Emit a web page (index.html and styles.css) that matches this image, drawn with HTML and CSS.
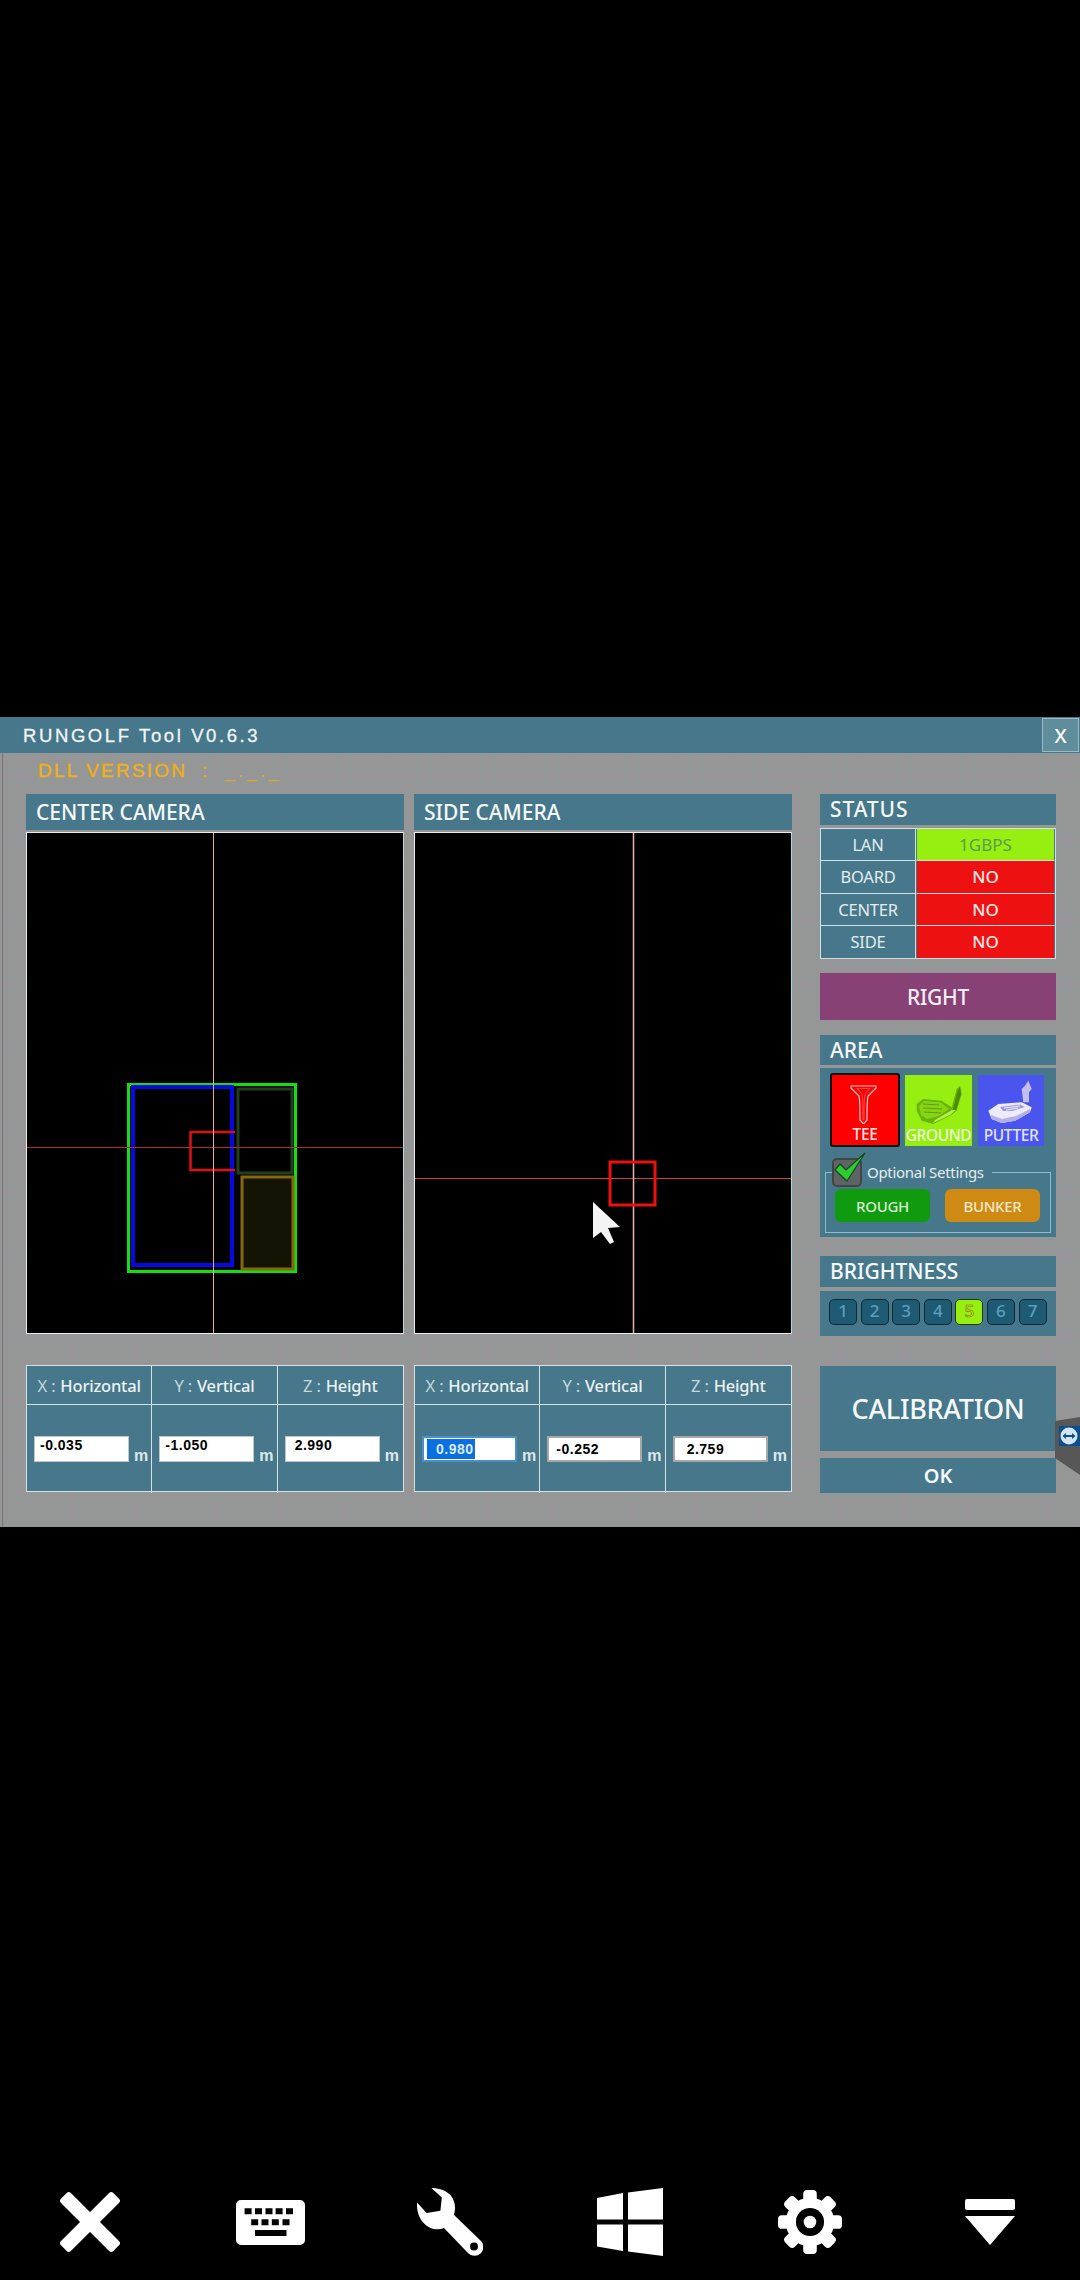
FILE: index.html
```html
<!DOCTYPE html>
<html lang="en">
<head>
<meta charset="utf-8">
<title>RUNGOLF Tool</title>
<link rel="stylesheet" href="styles.css">
</head>
<body>
<div class="screen">
  <main class="window">
    <header class="titlebar">
      <span class="title">RUNGOLF Tool V0.6.3</span>
      <button class="close">X</button>
    </header>
    <div class="dll">DLL VERSION&nbsp; :&nbsp; <span class="dll-v">_._._</span></div>
    <div class="content">
      <section class="cam-col">
        <h2 class="head cam-head">CENTER CAMERA</h2>
        <svg class="camera" viewBox="0 0 376 500" width="378" height="502">
          <rect x="101.500" y="251.500" width="167" height="187" fill="none" stroke="#10e010" stroke-width="3"/>
          <rect x="106" y="254" width="99" height="178" fill="none" stroke="#0808e0" stroke-width="4"/>
          <rect x="211" y="256" width="54" height="84" fill="none" stroke="#1e401e" stroke-width="3"/>
          <rect x="215" y="344" width="51" height="92" fill="#141405" stroke="#8a6510" stroke-width="3"/>
          <path d="M208 299H163.500V337H208" fill="none" stroke="#e01010" stroke-width="2.500"/>
          <path d="M0 314.500H376" stroke="#b52a2a" stroke-width="1"/>
          <path d="M186.500 0V500" stroke="#e8a8a0" stroke-width="1"/>
        </svg>
        <div class="coords">
          <div class="c-head"><span class="dim">X :</span> Horizontal</div>
          <div class="c-head"><span class="dim">Y :</span> Vertical</div>
          <div class="c-head"><span class="dim">Z :</span> Height</div>
          <div class="c-cell"><div class="field hi"><span>-0.035</span></div><span class="unit">m</span></div>
          <div class="c-cell"><div class="field hi"><span>-1.050</span></div><span class="unit">m</span></div>
          <div class="c-cell"><div class="field hi ind"><span>2.990</span></div><span class="unit">m</span></div>
        </div>
      </section>
      <section class="cam-col">
        <h2 class="head cam-head">SIDE CAMERA</h2>
        <svg class="camera" viewBox="0 0 376 500" width="378" height="502">
          <path d="M0 345.500H376" stroke="#d04040" stroke-width="1"/>
          <path d="M218.500 0V500" stroke="#eeb0a8" stroke-width="1.500"/>
          <rect x="195" y="329" width="45" height="43" fill="none" stroke="#ee1010" stroke-width="3"/>
          <polygon points="178,369 178,405 186,399 195,411 199,409 193,395 205,394" fill="#f4f4f4"/>
        </svg>
        <div class="coords">
          <div class="c-head"><span class="dim">X :</span> Horizontal</div>
          <div class="c-head"><span class="dim">Y :</span> Vertical</div>
          <div class="c-head"><span class="dim">Z :</span> Height</div>
          <div class="c-cell"><div class="field focus"><span class="sel">0.980</span></div><span class="unit">m</span></div>
          <div class="c-cell"><div class="field"><span>-0.252</span></div><span class="unit">m</span></div>
          <div class="c-cell"><div class="field ind"><span>2.759</span></div><span class="unit">m</span></div>
        </div>
      </section>
      <aside class="side">
        <h2 class="head side-head status-head">STATUS</h2>
        <div class="status">
          <div class="s-name">LAN</div><div class="s-val ok">1GBPS</div>
          <div class="s-name">BOARD</div><div class="s-val no">NO</div>
          <div class="s-name">CENTER</div><div class="s-val no">NO</div>
          <div class="s-name">SIDE</div><div class="s-val no">NO</div>
        </div>
        <button class="right-btn">RIGHT</button>
        <h2 class="head side-head area-head">AREA</h2>
        <div class="area">
          <div class="clubs">
            <div class="club tee">
              <svg class="club-art" viewBox="0 0 66 48" width="66" height="48">
                <path d="M19 10H44V12L36 20C35 24 35 30 35 44L31.500 48L28 44C28 30 28 24 27 20L19 12Z" fill="none" stroke="#ffc8c8" stroke-width="1.200"/>
                <path d="M25 12.500H38L33 18C32 24 32 32 32 44H31C31 32 31 24 30 18Z" fill="none" stroke="#ff5a5a" stroke-width=".8"/>
              </svg>
              <span>TEE</span>
            </div>
            <div class="club ground">
              <svg class="club-art" viewBox="0 0 67 50" width="67" height="50">
                <path d="M11.700 29L18.300 24L36.700 25.700L46.700 32.300L51.700 14L55 10.700L56.700 19L51.700 35.700L45 40.700L28.300 49L16.700 45.700L11.700 35.700Z" fill="#69b408"/>
                <path d="M14 31L19 26L36 27.500L44 34L34 41L22 44L16 40Z" fill="#86d414"/>
                <path d="M18 29L34 30M18 33L37 34M19 37L36 38" stroke="#5da106" stroke-width="1"/>
                <path d="M52 18L55 11.500L56 19L51 35L47 39Z" fill="#4d8a06"/>
                <path d="M28 48L45 40L51 35L47 35L30 45Z" fill="#b4ee4a"/>
              </svg>
              <span>GROUND</span>
            </div>
            <div class="club putter">
              <svg class="club-art" viewBox="0 0 66 50" width="66" height="50">
                <path d="M45.300 27.300L43.700 14L47 10.700L50.300 5.700L53.700 14L51 17.300V27.300Z" fill="#c4bef0"/>
                <path d="M10.300 35.700L20.300 29L43.700 27.300L53.700 32.300L52 37.300L37 45.700L23.700 48L13.700 44Z" fill="#ecebfc"/>
                <path d="M13 40L24 44L38 41L52 34L52 37.300L37 45.700L23.700 48L13.700 44Z" fill="#b5aeea"/>
                <path d="M22 32L42 29.500L47 32L34 36L25 36Z" fill="#9d96e6"/>
                <path d="M26 33L42 31M28 35L40 33" stroke="#f2f0ff" stroke-width="1"/>
              </svg>
              <span>PUTTER</span>
            </div>
          </div>
          <fieldset class="optional">
            <legend class="opt-legend">
              <span class="checkbox">
                <svg viewBox="0 0 34 34" width="34" height="34"><path d="M2 21L7 15L13 21L32 4L14 32Z" fill="#2fcb35" stroke="#134a18" stroke-width="1.200"/></svg>
              </span>
              <span class="opt-label">Optional Settings</span>
            </legend>
            <div class="opt-btns">
              <button class="opt rough">ROUGH</button>
              <button class="opt bunker">BUNKER</button>
            </div>
          </fieldset>
        </div>
        <h2 class="head side-head bright-head">BRIGHTNESS</h2>
        <div class="bright">
          <span class="lvl">1</span><span class="lvl">2</span><span class="lvl">3</span><span class="lvl">4</span><span class="lvl on">5</span><span class="lvl">6</span><span class="lvl">7</span>
        </div>
        <button class="calib">CALIBRATION</button>
        <button class="ok">OK</button>
      </aside>
    </div>
    <div class="tv-tab">
      <svg viewBox="0 0 26 58" width="26" height="58">
        <path d="M1 4L26 0V58L1 41Z" fill="#575757"/>
        <rect x="5" y="9" width="21" height="20" fill="#0a4f8f"/>
        <circle cx="15" cy="19" r="8.500" fill="#d6e4ef"/>
        <path d="M8.500 19L12 16V18H18V16L21.500 19L18 22V20H12V22Z" fill="#0a4f8f"/>
      </svg>
    </div>
  </main>
  <nav class="dock">
    <svg class="ico" viewBox="0 0 70 70" width="70" height="70"><g fill="#fff" transform="rotate(45 35 35)"><rect x="-2" y="28" width="74" height="14" rx="3"/><rect x="28" y="-2" width="14" height="74" rx="3"/></g></svg>
    <svg class="ico" viewBox="0 0 69 45" width="69" height="45"><path fill="#fff" fill-rule="evenodd" d="M5 0H64A5 5 0 0 1 69 5V40A5 5 0 0 1 64 45H5A5 5 0 0 1 0 40V5A5 5 0 0 1 5 0ZM8.600 8.300V14.300H15.600V8.300ZM19 8.300V14.300H26V8.300ZM29.500 8.300V14.300H36.500V8.300ZM39.600 8.300V14.300H46.600V8.300ZM50 8.300V14.300H57V8.300ZM15.200 19.300V25.300H22.200V19.300ZM25.500 19.300V25.300H32.500V19.300ZM35.800 19.300V25.300H42.800V19.300ZM46.500 19.300V25.300H53.500V19.300ZM19 30V36H50.500V30Z"/></svg>
    <svg class="ico" viewBox="0 0 66 68" width="66" height="68"><path fill="#fff" fill-rule="evenodd" d="M14.500 0C28 0 42 8 37 27L64 53A8.700 8.700 0 0 1 51 65L27 40C14 45 -1 34 0 14.500L9.600 25L23.400 22.700L24.800 9.600ZM57 54.500A4 4 0 1 0 57 62.500A4 4 0 1 0 57 54.500Z"/></svg>
    <svg class="ico" viewBox="0 0 66.500 68" width="66.500" height="68"><path fill="#fff" d="M0 10L26 5V31.500H0ZM31 4.500L66.500 0V31.500H31ZM0 36.500H26V63L0 58.500ZM31 36.500H66.500V68L31 63.500Z"/></svg>
    <svg class="ico" viewBox="0 0 66 66" width="64" height="64"><g fill="#fff"><rect x="26" y="0" width="14" height="66" rx="4"/><rect x="26" y="0" width="14" height="66" rx="4" transform="rotate(45 33 33)"/><rect x="26" y="0" width="14" height="66" rx="4" transform="rotate(90 33 33)"/><rect x="26" y="0" width="14" height="66" rx="4" transform="rotate(135 33 33)"/><circle cx="33" cy="33" r="25"/></g><circle cx="33" cy="33" r="14.500" fill="#000"/><circle cx="33" cy="33" r="6.500" fill="#fff"/></svg>
    <svg class="ico" viewBox="0 0 50 46" width="50" height="46"><path fill="#fff" d="M2 0H48A2 2 0 0 1 50 2V9A2 2 0 0 1 48 11H2A2 2 0 0 1 0 9V2A2 2 0 0 1 2 0ZM0 17H50L25 46Z"/></svg>
  </nav>
</div>
</body>
</html>
```
FILE: styles.css
```css
* { box-sizing: border-box; }
html, body { margin: 0; padding: 0; background: #000; }
body { width: 1080px; height: 2280px; overflow: hidden; font-family: "Noto Sans", "Open Sans", sans-serif; color: #fff; }
button { font-family: inherit; border: 0; padding: 0; margin: 0; display: block; color: #fff; }
h2 { margin: 0; font-weight: 500; }

.screen { display: flex; flex-direction: column; height: 2280px; padding-top: 717px; }

.window {
  position: relative;
  height: 810px;
  background-color: #969696;
  background-image:
    linear-gradient(to right, #969696 2px, #777 2px, #777 3px, transparent 3px),
    repeating-linear-gradient(to right, rgba(120,165,170,.16) 0 1px, transparent 1px 13px),
    repeating-linear-gradient(to bottom, rgba(120,165,170,.16) 0 1px, transparent 1px 13px);
}

.titlebar { height: 36px; background: #46778a; display: flex; align-items: center; justify-content: space-between; }
.title { font: 18.500px "Liberation Sans", Arial, sans-serif; letter-spacing: 2.6px; -webkit-text-stroke: .3px #f0f5f6; margin: 2px 0 0 23px; color: #f0f5f6; }
.close { width: 37px; height: 34px; background: #5f8d9b; border: 1px solid #9bbcc4; font: 500 20px "Noto Sans", sans-serif; margin-right: 1px; }

.dll { height: 41px; padding: 4px 0 0 38px; font: 19px/27px "Liberation Sans", Arial, sans-serif; letter-spacing: 2.2px; -webkit-text-stroke: .35px #efb116; color: #efb116; white-space: pre; }
.dll-v { color: #d6a73a; -webkit-text-stroke: 0; letter-spacing: 3px; }

.content { display: flex; padding-left: 26px; }
.cam-col { width: 378px; margin-right: 10px; }
.head { background: #46778a; color: #f4f8f9; font-size: 21px; letter-spacing: 0; line-height: 36px; }
.cam-head { height: 36px; padding-left: 10px; }
.camera { display: block; margin-top: 2px; background: #000; border: 1px solid #e8eef0; border-right-color: #a8dde0; }

.coords {
  margin-top: 31px;
  display: grid;
  grid-template-columns: repeat(3, 1fr);
  grid-template-rows: 39px 88px;
  background: #46778a;
  border: 1px solid #d5e3e6;
  height: 127px;
}
.c-head { display: flex; align-items: center; justify-content: center; gap: 5px; font-size: 16.500px; letter-spacing: -.2px; color: #eaf2f3; border-bottom: 1px solid #d5e3e6; border-right: 1px solid #d5e3e6; white-space: nowrap; font-weight: 500; }
.dim { font-weight: 400; color: #c5d8dd; }
.c-head:nth-child(3) { border-right: 0; }
.c-cell { display: flex; align-items: flex-end; padding: 0 0 31px 7px; border-right: 1px solid #d5e3e6; }
.c-cell:nth-child(6) { border-right: 0; }
.field { width: 95px; height: 26px; background: #fff; border: 2px solid #a7a7a7; color: #000; font: 700 14px/22px "Liberation Sans", Arial, sans-serif; letter-spacing: .5px; padding-left: 7px; }
.field.hi { border-width: 1px; border-color: #bcc8cc; line-height: 17px; padding-left: 5px; }
.field.ind { padding-left: 12px; }
.field.ind.hi { padding-left: 9px; }
.field.focus { border-color: #4a90c8; padding-left: 3px; }
.sel { background: #0a6fe0; color: #dceaf8; padding: 0 1px 0 9px; display: inline-block; line-height: 20px; margin-top: 1px; }
.unit { font: 700 16px "Liberation Sans", Arial, sans-serif; color: #dde8ea; margin-left: 5px; margin-bottom: -3px; }

.side { width: 236px; margin-left: 18px; }
.side-head { height: 31px; padding-left: 10px; line-height: 30px; }
.status-head { font-size: 21px; letter-spacing: .9px; }
.status { margin-top: 3px; display: grid; grid-template-columns: 95px 139px; grid-auto-rows: 32.250px; border: 1px solid #cfdfe3; height: 131px; background: #cfdfe3; }
.s-name { background: #46778a; display: flex; align-items: center; justify-content: center; font-size: 16.500px; color: #e4eef0; border-bottom: 1px solid #cfdfe3; border-right: 1px solid #cfdfe3; letter-spacing: -.2px; }
.s-val { display: flex; align-items: center; justify-content: center; font-size: 17px; border-bottom: 1px solid #cfdfe3; border-left: 1px solid #46778a; border-right: 1px solid #46778a; font-weight: 500; }
.s-name:nth-last-child(2), .s-val:last-child { border-bottom: 0; }
.ok { background: #96ef10; color: #5b9a55; font-weight: 400; }
.no { background: #ee1111; color: #f6e6e6; }
.right-btn { margin-top: 14px; width: 236px; height: 47px; background: #874174; font-size: 21px; font-weight: 500; letter-spacing: -.3px; color: #f6eef4; }

.area-head { margin-top: 15px; height: 30px; }
.area { margin-top: 3px; background: #46778a; height: 169px; padding: 5px 5px 0; }
.clubs { display: flex; padding-left: 5px; align-items: center; }
.club { display: flex; flex-direction: column; align-items: center; justify-content: flex-end; height: 71px; overflow: hidden; font-size: 15.500px; font-weight: 500; letter-spacing: -.4px; color: #eee; }
.club span { line-height: 22px; margin-top: -1px; }
.club-art { display: block; flex: none; }
.tee { width: 70px; height: 74px; background: #f00; border: 2px solid #111; border-radius: 3px; color: #ffe6e6; }
.ground { width: 67px; margin-left: 5px; background: #96ef10; color: #eefbdc; }
.putter { width: 66px; margin-left: 6px; background: #4a55ee; color: #e0e3ff; }
.optional { margin: 10px 0 0; padding: 0 10px 0 9px; width: 226px; height: 76px; border: 1px solid #8fbcc8; position: relative; }
.opt-legend { padding: 0 8px 0 0; margin-left: -3px; display: flex; align-items: center; height: 30px; }
.checkbox { width: 30px; height: 29px; background: #5f6366; border: 2px solid #444; border-radius: 5px; display: block; }
.checkbox svg { display: block; margin: -11px 0 0 -1px; }
.opt-label { font-size: 15px; color: #e4eef0; letter-spacing: -.3px; margin-left: 5px; }
.opt-btns { display: flex; justify-content: space-between; margin-top: 2px; }
.opt { width: 95px; height: 33px; border-radius: 6px; font-size: 15px; font-weight: 500; letter-spacing: -.3px; }
.rough { background: #0f9a0f; color: #d8f0d0; }
.bunker { background: #cf8a14; color: #f6e8cc; }

.bright-head { margin-top: 19px; height: 31px; }
.bright { margin-top: 4px; background: #46778a; height: 45px; display: flex; gap: 3.600px; padding: 8px 0 0 9px; }
.lvl { width: 28px; height: 26px; border-radius: 5px; background: #1e5a72; border: 1.500px solid #0c2a36; color: #5a9fbd; font: 500 17px/22px "Noto Sans", sans-serif; text-align: center; }
.lvl.on { background: #96ef10; color: #e6dc1a; -webkit-text-stroke: .6px #5f7a10; border-color: #1f3a10; }
.calib { margin-top: 30px; width: 236px; height: 85px; background: #46778a; font-size: 27px; font-weight: 500; letter-spacing: -.3px; color: #f4f8f9; }
button.ok { margin-top: 7px; width: 236px; height: 35px; background: #46778a; font-size: 20px; font-weight: 600; color: #f4f8f9; }

.tv-tab { position: absolute; right: 0; top: 700px; width: 26px; height: 58px; }
.tv-tab svg { display: block; }

.dock { margin-top: auto; height: 116px; display: grid; grid-template-columns: repeat(6, 1fr); align-items: center; justify-items: center; }
.ico { display: block; }
```
